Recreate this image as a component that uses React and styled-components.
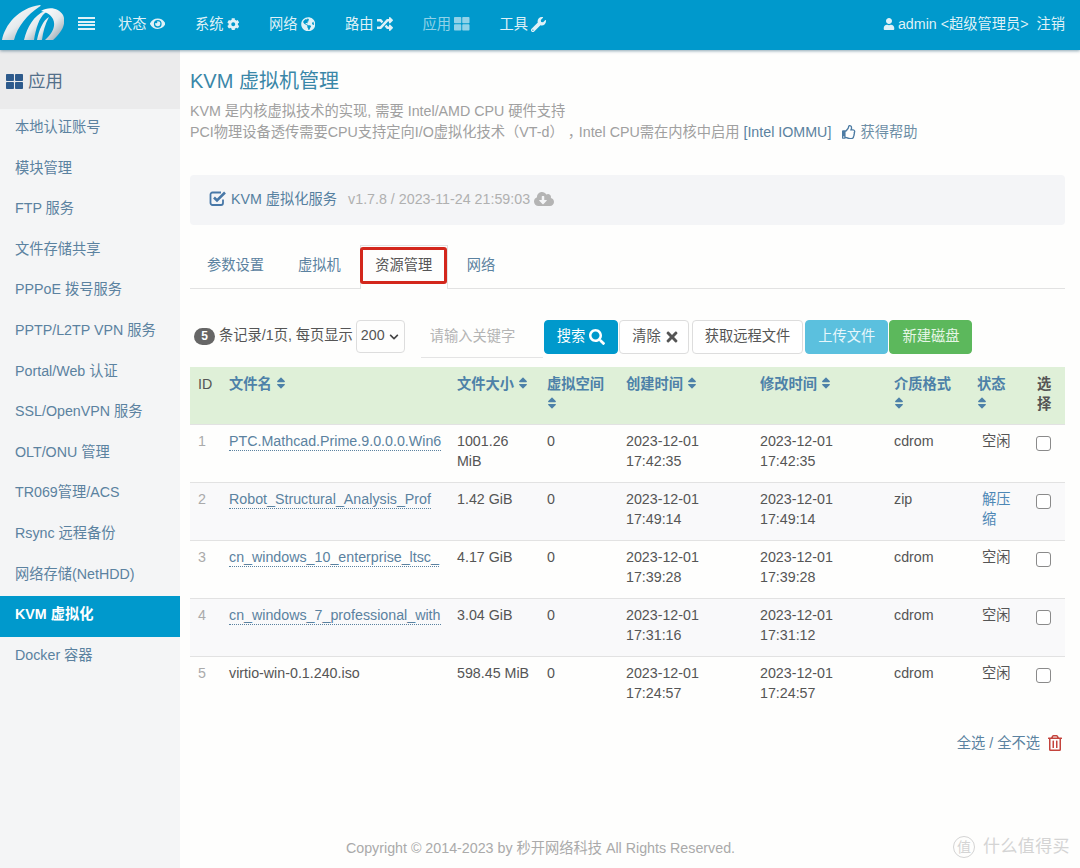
import React from 'react';
import styled, { createGlobalStyle } from 'styled-components';
import {
  FaEye, FaCog, FaGlobeAmericas, FaRandom, FaThLarge, FaWrench, FaUser,
  FaCloudDownloadAlt, FaRegThumbsUp, FaSearch, FaTimes,
  FaSort, FaRegTrashAlt, FaChevronDown,
} from 'react-icons/fa';

const GlobalStyle = createGlobalStyle`
  html, body {
    margin: 0;
    padding: 0;
    background: #fefefd;
  }
  body {
    font-family: "Liberation Sans", "Noto Sans CJK SC", sans-serif;
    font-size: 14.25px;
    line-height: 20px;
    color: #555;
  }
  * { box-sizing: border-box; }
`;

const Page = styled.div`
  position: relative;
  width: 1080px;
  height: 868px;
  overflow: hidden;
  display: flex;
  flex-direction: column;
`;

const TopBar = styled.header`
  height: 50px;
  flex: none;
  background: #0099cc;
  box-shadow: 0 1px 3px rgba(0, 60, 90, 0.45);
  display: flex;
  align-items: center;
  color: #dff1f7;
  position: relative;
  z-index: 2;
`;

const LogoBox = styled.div`
  width: 78px;
  flex: none;
  padding-left: 1px;
  margin-bottom: 8px;
  display: flex;
`;

const Burger = styled.div`
  width: 17px;
  height: 13px;
  margin: -4px 8px 0 0;
  flex: none;
  background: repeating-linear-gradient(#dff1f7 0 2px, transparent 2px 3.6px);
`;

const Nav = styled.nav`
  display: flex;
  margin-top: -2px;
`;

const NavItem = styled.a`
  display: flex;
  align-items: center;
  gap: 3px;
  padding: 0 15px;
  opacity: ${(p) => (p.$dim ? 0.65 : 1)};
  svg { font-size: ${(p) => p.$size}px; }
`;

const UserBox = styled.div`
  margin-left: auto;
  margin-right: 15px;
  margin-top: -2px;
  display: flex;
  align-items: center;
  gap: 3px;
  white-space: pre;
  svg { font-size: 12px; }
`;

const Body = styled.div`
  flex: 1;
  display: flex;
  min-height: 0;
`;

const Side = styled.aside`
  width: 180px;
  flex: none;
  background: #f4f5f6;
`;

const SideTitle = styled.div`
  height: 59px;
  background: #ebebec;
  padding: 21px 0 0 6px;
  font-size: 17.5px;
  color: #54708a;
  display: flex;
  align-items: flex-start;
  gap: 5px;
  svg { font-size: 17px; color: #2d5a8c; margin-top: 2px; }
`;

const SideItem = styled.a`
  display: block;
  height: 40.6px;
  padding: 8px 0 0 15px;
  color: ${(p) => (p.$active ? '#fff' : '#5b82a0')};
  background: ${(p) => (p.$active ? '#0099cc' : 'none')};
  font-weight: ${(p) => (p.$active ? 700 : 400)};
`;

const Main = styled.main`
  flex: 1;
  padding: 19px 15px 0 10px;
  display: flex;
  flex-direction: column;
  min-width: 0;
`;

const Title = styled.h2`
  margin: 0;
  font-size: 20px;
  line-height: 24px;
  font-weight: 400;
  color: #3a87a8;
`;

const Intro = styled.p`
  margin: 8px 0 0;
  color: #a0a0a0;
  line-height: 21px;
`;

const Comma = styled.span`
  font-feature-settings: "halt";
`;

const Link = styled.a`
  color: #5b82a0;
`;

const HelpLink = styled.span`
  color: #6d8ea6;
  margin-left: 11px;
  svg { margin-right: 4px; vertical-align: -2px; color: #4c7ba3; }
`;

const Well = styled.div`
  margin-top: 32px;
  height: 50px;
  background: #f4f5f7;
  border-radius: 4px;
  padding: 0 19px 3px;
  display: flex;
  align-items: center;
`;

const ServiceName = styled.span`
  color: #5580a0;
  display: flex;
  align-items: center;
  gap: 4px;
  margin-right: 11px;
`;

const Version = styled.span`
  color: #b0b0b0;
  display: flex;
  align-items: center;
  gap: 4px;
  svg { font-size: 20px; color: #b4b4b4; }
`;

const Tabs = styled.div`
  margin-top: 20px;
  height: 44px;
  display: flex;
  gap: 4px;
  padding-left: 2px;
  border-bottom: 1px solid #e2e2e2;
`;

const Tab = styled.a`
  position: relative;
  height: 44px;
  padding: 10px 15px 0;
  color: ${(p) => (p.$active ? '#555' : '#5b82a0')};
  border: 1px solid ${(p) => (p.$active ? '#e2e2e2' : 'transparent')};
  border-width: ${(p) => (p.$active ? '1px 1px 0' : '0')};
  background: ${(p) => (p.$active ? '#fefefd' : 'none')};
  ${(p) => p.$active && `
    padding: 9px 14.5px 0;
    &::after {
      content: "";
      box-sizing: border-box;
      position: absolute;
      left: -1px;
      top: 1px;
      width: 87px;
      height: 37px;
      border: 3px solid #d3271c;
      border-radius: 3px;
    }
  `}
`;

const Toolbar = styled.div`
  margin-top: 31px;
  height: 47px;
  display: flex;
  align-items: flex-start;
`;

const Count = styled.div`
  height: 33px;
  display: flex;
  align-items: center;
  padding: 0 0 3px 4px;
  gap: 4px;
  color: #555;
`;

const Badge = styled.span`
  width: 21px;
  height: 17px;
  margin-top: 3px;
  border-radius: 9px;
  background: #666;
  color: #fff;
  font-size: 12px;
  font-weight: 700;
  line-height: 17px;
  text-align: center;
`;

const PageSize = styled.div`
  width: 49px;
  height: 33px;
  margin-left: 3px;
  border: 1px solid #ddd;
  border-radius: 4px;
  display: flex;
  align-items: center;
  padding: 0 0 3px 4px;
  gap: 4px;
  color: #555;
  svg { font-size: 10px; color: #444; margin-top: 3px; }
`;

const SearchInput = styled.input`
  width: 122px;
  height: 38px;
  margin: 0 1px 0 16px;
  border: 0;
  border-bottom: 1px solid #e4e4e4;
  background: none;
  outline: 0;
  padding: 0 9px 6px;
  font: inherit;
  &::placeholder { color: #b4b4b4; opacity: 1; }
`;

const Btn = styled.button`
  height: 34px;
  padding: 0 12px 3px;
  margin-right: ${(p) => p.$gap || 0}px;
  border: 1px solid ${(p) => p.$border || '#ddd'};
  border-radius: 4px;
  background: ${(p) => p.$bg || '#fff'};
  color: ${(p) => p.$color || '#555'};
  font: inherit;
  display: flex;
  align-items: center;
  gap: 4px;
  svg { font-size: 16px; margin-top: 3px; }
`;

const ClearIcon = styled(FaTimes)`
  margin-left: -1px;
  margin-right: -4px;
`;

const Table = styled.table`
  width: 875px;
  table-layout: fixed;
  border-collapse: collapse;
`;

const HeadRow = styled.tr`
  height: 57px;
  background: #dff0d8;
`;

const Th = styled.th`
  padding: 7px 8px;
  text-align: left;
  vertical-align: top;
  font-weight: ${(p) => (p.$light ? 400 : 700)};
  color: ${(p) => (p.$plain ? '#555' : '#4d81a8')};
  svg { font-size: 14px; vertical-align: -1px; margin-left: -2px; }
`;

const Row = styled.tr`
  height: 58px;
  background: ${(p) => (p.$odd ? '#f9f9fa' : 'transparent')};
  border-top: 1px solid #e2e2e2;
`;

const Td = styled.td`
  padding: 6px 8px;
  vertical-align: top;
  color: ${(p) => (p.$muted ? '#aaa' : '#555')};
  white-space: ${(p) => (p.$nowrap ? 'nowrap' : 'normal')};
  overflow: hidden;
`;

const FileLink = styled.a`
  color: #5b82a0;
  display: inline-block;
  line-height: 18px;
  border-bottom: 1px dotted #5b82a0;
`;

const Status = styled.span`
  display: block;
  padding-left: 5px;
  color: ${(p) => (p.$link ? '#4d87b5' : '#555')};
`;

const Check = styled.input`
  appearance: none;
  display: block;
  width: 15px;
  height: 15px;
  margin: 5px 0 0 -1px;
  border: 1px solid #8a8a8a;
  border-radius: 3px;
  background: #fff;
`;

const Actions = styled.div`
  margin-top: 19px;
  display: flex;
  justify-content: flex-end;
  align-items: center;
  padding-right: 2px;
  color: #5b82a0;
  gap: 7px;
  svg { font-size: 16px; color: #c4433c; }
`;

const Footer = styled.footer`
  margin-top: auto;
  height: 30px;
  text-align: center;
  color: #aaa;
  padding-right: 174px;
`;

const Mark = styled.div`
  position: absolute;
  right: 10px;
  bottom: 10px;
  display: flex;
  align-items: center;
  gap: 8px;
  color: #d4d4d4;
  font-size: 17px;
  letter-spacing: 0.4px;
`;

const MarkRing = styled.span`
  width: 22px;
  height: 22px;
  border: 1px solid #d4d4d4;
  border-radius: 50%;
  font-size: 14px;
  letter-spacing: 0;
  line-height: 20px;
  text-align: center;
`;

const Logo = () => (
  <svg width="63" height="42" viewBox="0 0 63 42">
    <defs>
      <linearGradient id="sw" x1="0" y1="0" x2="0.8" y2="1">
        <stop offset="0" stopColor="#ffffff" />
        <stop offset="0.55" stopColor="#e6ebee" />
        <stop offset="1" stopColor="#93a6b0" />
      </linearGradient>
    </defs>
    <path d="M1 40 C4 25 17 8 39 5 C40 5 40 6 38 7 C27 14 16 27 13 40 Z" fill="url(#sw)" />
    <path d="M23 40 C26 27 33 15 44 11 C46 11 46 12 44 13 C38 18 35 28 33 40 Z" fill="url(#sw)" />
    <path d="M36 40 C38 30 42 20 48 17 C44 24 42 32 41 40 Z" fill="url(#sw)" />
    <path d="M40 11 C48 6 58 8 62 15 C66 24 60 33 52 40 L44 40 C52 33 55 25 52 19 C49 14 45 12 40 11 Z" fill="url(#sw)" />
  </svg>
);

const CheckMark = () => (
  <svg width="18" height="17" viewBox="0 0 18 17" fill="none" stroke="#4878a8">
    <path d="M14 9.5 V13 a2 2 0 0 1 -2 2 H3.5 a2 2 0 0 1 -2 -2 V4.5 a2 2 0 0 1 2 -2 H12" strokeWidth="1.8" />
    <path d="M5 7.5 L8 10.5 L16 2.5" strokeWidth="2.6" />
  </svg>
);

const navItems = [
  ['状态', FaEye, 15.5],
  ['系统', FaCog, 12.5],
  ['网络', FaGlobeAmericas, 14.5],
  ['路由', FaRandom, 16],
  ['应用', FaThLarge, 15.5, true],
  ['工具', FaWrench, 15],
];

const sideItems = [
  '本地认证账号', '模块管理', 'FTP 服务', '文件存储共享', 'PPPoE 拨号服务',
  'PPTP/L2TP VPN 服务', 'Portal/Web 认证', 'SSL/OpenVPN 服务', 'OLT/ONU 管理',
  'TR069管理/ACS', 'Rsync 远程备份', '网络存储(NetHDD)', 'KVM 虚拟化', 'Docker 容器',
];

const columns = [31, 228, 90, 79, 134, 134, 83, 60, 36];

const files = [
  { id: 1, name: 'PTC.Mathcad.Prime.9.0.0.0.Win6', size: '1001.26 MiB', made: ['2023-12-01', '17:42:35'], changed: ['2023-12-01', '17:42:35'], media: 'cdrom', state: '空闲' },
  { id: 2, name: 'Robot_Structural_Analysis_Prof', size: '1.42 GiB', made: ['2023-12-01', '17:49:14'], changed: ['2023-12-01', '17:49:14'], media: 'zip', state: '解压缩', busy: true },
  { id: 3, name: 'cn_windows_10_enterprise_ltsc_', size: '4.17 GiB', made: ['2023-12-01', '17:39:28'], changed: ['2023-12-01', '17:39:28'], media: 'cdrom', state: '空闲' },
  { id: 4, name: 'cn_windows_7_professional_with', size: '3.04 GiB', made: ['2023-12-01', '17:31:16'], changed: ['2023-12-01', '17:31:12'], media: 'cdrom', state: '空闲' },
  { id: 5, name: 'virtio-win-0.1.240.iso', size: '598.45 MiB', made: ['2023-12-01', '17:24:57'], changed: ['2023-12-01', '17:24:57'], media: 'cdrom', state: '空闲', plain: true },
];

const App = () => (
  <Page>
    <GlobalStyle />
    <TopBar>
      <LogoBox><Logo /></LogoBox>
      <Burger />
      <Nav>
        {navItems.map(([label, Icon, size, dim]) => (
          <NavItem key={label} $size={size} $dim={dim}>{label}<Icon /></NavItem>
        ))}
      </Nav>
      <UserBox><FaUser />admin &lt;超级管理员&gt;  注销</UserBox>
    </TopBar>
    <Body>
      <Side>
        <SideTitle><FaThLarge />应用</SideTitle>
        {sideItems.map((item) => (
          <SideItem key={item} $active={item === 'KVM 虚拟化'}>{item}</SideItem>
        ))}
      </Side>
      <Main>
        <Title>KVM 虚拟机管理</Title>
        <Intro>
          KVM 是内核虚拟技术的实现, 需要 Intel/AMD CPU 硬件支持<br />
          PCI物理设备透传需要CPU支持定向I/O虚拟化技术（VT-d）&nbsp;<Comma>，</Comma>&nbsp;Intel CPU需在内核中启用 <Link>[Intel IOMMU]</Link>
          <HelpLink><FaRegThumbsUp />获得帮助</HelpLink>
        </Intro>
        <Well>
          <ServiceName><CheckMark />KVM 虚拟化服务</ServiceName>
          <Version>v1.7.8 / 2023-11-24 21:59:03<FaCloudDownloadAlt /></Version>
        </Well>
        <Tabs>
          <Tab>参数设置</Tab>
          <Tab>虚拟机</Tab>
          <Tab $active>资源管理</Tab>
          <Tab>网络</Tab>
        </Tabs>
        <Toolbar>
          <Count><Badge>5</Badge>条记录/1页, 每页显示</Count>
          <PageSize>200<FaChevronDown /></PageSize>
          <SearchInput placeholder="请输入关键字" />
          <Btn $bg="#0099cc" $border="#0099cc" $color="#fff" $gap={1}>搜索<FaSearch /></Btn>
          <Btn $gap={3}>清除<ClearIcon /></Btn>
          <Btn $gap={2}>获取远程文件</Btn>
          <Btn $bg="#5bc0de" $border="#5bc0de" $color="#e6f6fb" $gap={1}>上传文件</Btn>
          <Btn $bg="#5cb85c" $border="#5cb85c" $color="#e6f6e6">新建磁盘</Btn>
        </Toolbar>
        <Table>
          <colgroup>
            {columns.map((w, i) => <col key={i} style={{ width: w }} />)}
          </colgroup>
          <thead>
            <HeadRow>
              <Th $plain $light>ID</Th>
              <Th>文件名 <FaSort /></Th>
              <Th>文件大小 <FaSort /></Th>
              <Th>虚拟空间 <FaSort /></Th>
              <Th>创建时间 <FaSort /></Th>
              <Th>修改时间 <FaSort /></Th>
              <Th>介质格式 <FaSort /></Th>
              <Th>状态<br /><FaSort /></Th>
              <Th $plain>选择</Th>
            </HeadRow>
          </thead>
          <tbody>
            {files.map((f) => (
              <Row key={f.id} $odd={f.id % 2 === 0}>
                <Td $muted>{f.id}</Td>
                <Td $nowrap>
                  {f.plain ? f.name : <FileLink>{f.name}</FileLink>}
                </Td>
                <Td>{f.size}</Td>
                <Td>0</Td>
                <Td>{f.made[0]}<br />{f.made[1]}</Td>
                <Td>{f.changed[0]}<br />{f.changed[1]}</Td>
                <Td>{f.media}</Td>
                <Td><Status $link={f.busy}>{f.state}</Status></Td>
                <Td><Check type="checkbox" /></Td>
              </Row>
            ))}
          </tbody>
        </Table>
        <Actions>全选 / 全不选<FaRegTrashAlt /></Actions>
        <Footer>Copyright © 2014-2023 by 秒开网络科技 All Rights Reserved.</Footer>
      </Main>
    </Body>
    <Mark><MarkRing>值</MarkRing>什么值得买</Mark>
  </Page>
);

export default App;
